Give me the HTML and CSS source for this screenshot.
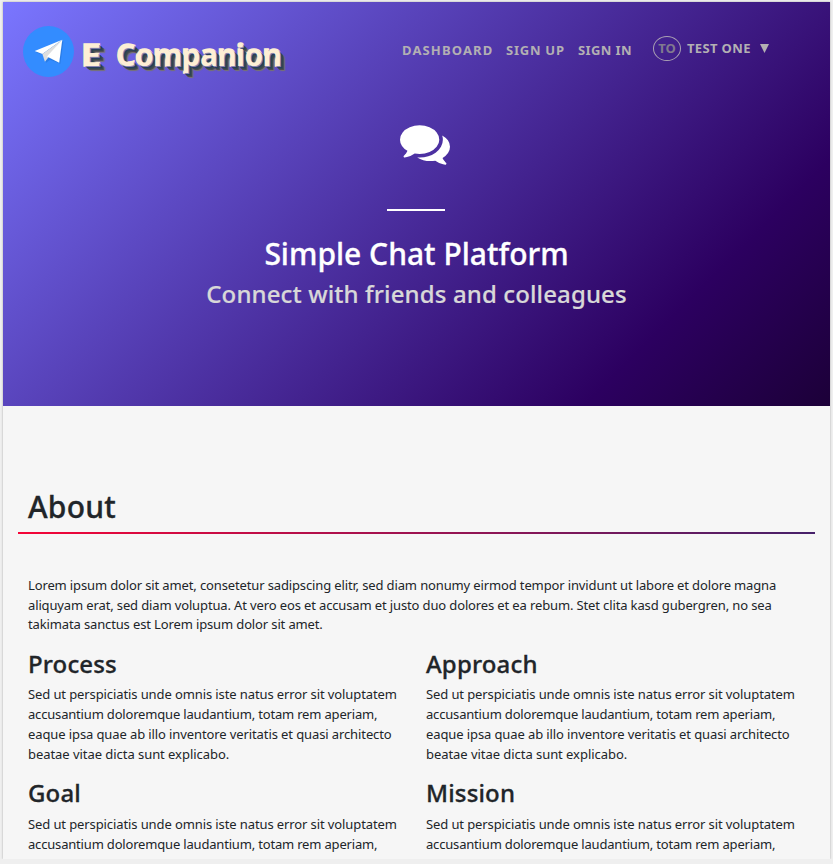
FILE: index.html
```html
<!DOCTYPE html>
<html lang="en">
<head>
<meta charset="utf-8">
<title>E Companion</title>
<link rel="stylesheet" href="styles.css">
</head>
<body>
<div class="page">
  <header class="hero">
    <nav class="nav">
      <a class="brand">
        <svg class="brand-icon" viewBox="0 0 50 50">
          <circle cx="25" cy="25" r="25" fill="#338cff"/>
          <path d="M12 25 39 14 36 36 26 32 22 35 19 27Z" fill="#1b5fb8" opacity=".35" transform="translate(.6 1)"/>
          <path d="M11.500 24.500 38.500 13.500 19 27.500Z" fill="#fff"/>
          <path d="M19 27.500 38.500 13.500 21.500 35Z" fill="#dedede"/>
          <path d="M23.500 30 38.500 13.500 35.500 36Z" fill="#fff"/>
        </svg>
        <span class="brand-name"><span class="brand-e">E</span> Companion</span>
      </a>
      <div class="links">
        <a class="link-dashboard">DASHBOARD</a>
        <a class="link-up">SIGN UP</a>
        <a class="link-in">SIGN IN</a>
      </div>
      <div class="user">
        <span class="avatar">TO</span>
        <span class="user-name">TEST ONE</span>
        <svg class="caret" viewBox="0 0 9 9"><path d="M0 0H9L4.500 9Z" fill="#b3b0b3"/></svg>
      </div>
    </nav>
    <div class="intro">
      <svg class="chat" viewBox="0 0 1792 1408">
        <path fill="#fff" d="M1408 512q0 139-94 257t-256.500 186.500-353.500 68.500q-86 0-176-16-124 88-278 128-36 9-86 16h-3q-11 0-20.500-8t-11.500-21q-1-3-1-6.500t.5-6.500 2-6l2.500-5 3.500-5.500 4-5 4.500-5 4-4.500q5-6 23-25t26-29.500 22.500-29 25-38.500 20.500-44q-124-72-195-177t-71-224q0-139 94-257t256.500-186.500 353.500-68.500 353.500 68.500 256.500 186.500 94 257zm384 256q0 120-71 224.500t-195 176.500q10 24 20.500 44t25 38.500 22.500 29 26 29.500 23 25q1 1 4 4.500t4.500 5 4 5 3.500 5.500l2.500 5 2 6 .5 6.500-1 6.500q-3 14-13 22t-22 7q-50-7-86-16-154-40-278-128-90 16-176 16-271 0-472-132 58 4 88 4 161 0 309-45t264-129q125-92 192-212t67-254q0-77-23-152 129 71 204 178t75 230z"/>
      </svg>
      <div class="rule"></div>
      <h1 class="title">Simple Chat Platform</h1>
      <p class="subtitle">Connect with friends and colleagues</p>
    </div>
  </header>
  <main class="about">
    <h2 class="about-title">About</h2>
    <div class="about-rule"></div>
    <p class="lead">Lorem ipsum dolor sit amet, consetetur sadipscing elitr, sed diam nonumy eirmod tempor invidunt ut labore et dolore magna<br>aliquyam erat, sed diam voluptua. At vero eos et accusam et justo duo dolores et ea rebum. Stet clita kasd gubergren, no sea<br>takimata sanctus est Lorem ipsum dolor sit amet.</p>
    <div class="grid">
      <section class="item">
        <h3>Process</h3>
        <p>Sed ut perspiciatis unde omnis iste natus error sit voluptatem<br><span class="tight">accusantium doloremque laudantium, totam rem aperiam,</span><br>eaque ipsa quae ab illo inventore veritatis et quasi architecto<br><span class="loose">beatae vitae dicta sunt explicabo.</span></p>
      </section>
      <section class="item">
        <h3>Approach</h3>
        <p>Sed ut perspiciatis unde omnis iste natus error sit voluptatem<br><span class="tight">accusantium doloremque laudantium, totam rem aperiam,</span><br>eaque ipsa quae ab illo inventore veritatis et quasi architecto<br><span class="loose">beatae vitae dicta sunt explicabo.</span></p>
      </section>
      <section class="item lower">
        <h3>Goal</h3>
        <p>Sed ut perspiciatis unde omnis iste natus error sit voluptatem<br><span class="tight">accusantium doloremque laudantium, totam rem aperiam,</span><br>eaque ipsa quae ab illo inventore veritatis et quasi architecto</p>
      </section>
      <section class="item lower">
        <h3>Mission</h3>
        <p>Sed ut perspiciatis unde omnis iste natus error sit voluptatem<br><span class="tight">accusantium doloremque laudantium, totam rem aperiam,</span><br>eaque ipsa quae ab illo inventore veritatis et quasi architecto</p>
      </section>
    </div>
  </main>
</div>
</body>
</html>
```
FILE: styles.css
```css
* { box-sizing: border-box; }
html { height: 100%; overflow: hidden; background: #efefef; }
body { margin: 0; padding: 2px 3px 0; color: #212529; font: 13px/20px "Noto Sans", "Open Sans", sans-serif; }
h1, h2, h3, p { margin: 0; font-weight: 500; white-space: nowrap; }
h1, h2, h3 { -webkit-text-stroke: .3px currentColor; }
.page { width: 827px; height: 857px; overflow: hidden; background: #f6f6f6; box-shadow: 0 0 2px rgba(0,0,0,.3); }
.hero { height: 404px; background: linear-gradient(135deg, #7a76ff 0%, #2c0060 80%, #1c0038 100%); }
.nav { display: flex; height: 98px; padding: 24px 0 0 20px; white-space: nowrap; color: #b3b0b3; font-weight: 700; }
.brand { display: flex; width: 379px; gap: 7px; }
.brand-icon { width: 51px; height: 51px; flex: none; }
.brand-name { font: 700 30px/57px "Noto Sans", sans-serif; color: #feefd5; letter-spacing: -.65px; -webkit-text-stroke: 1.5px #feefd5; paint-order: stroke fill; stroke-linejoin: round; text-shadow: 1px 1px 0 #8a86b0, 2px 2px 0 #253c61, 3px 3px 0 #35484e, 4px 4px 0 #4c4b50, 5px 5px 1px #77746f; }
.brand-e { display: inline-block; margin-right: 12px; transform: scaleX(1.2); transform-origin: 0 50%; }
.links { display: flex; width: 251px; padding-top: 14px; letter-spacing: 1.15px; }
.link-dashboard { width: 104px; }
.link-up { width: 72px; letter-spacing: .75px; }
.link-in { letter-spacing: .4px; }
.user { display: flex; align-items: center; height: 26px; margin-top: 9px; }
.avatar { width: 28px; height: 25px; border: 1px solid #aaa1b3; border-radius: 50%; line-height: 23px; text-align: center; color: #81798f; }
.user-name { margin: 0 9px 0 6px; letter-spacing: .35px; }
.caret { width: 9px; height: 9px; }
.intro { display: flex; flex-direction: column; align-items: center; padding-top: 25px; color: #fff; }
.chat { width: 50px; height: 40px; margin-left: 17px; }
.rule { width: 58px; height: 2px; margin: 44px 1px 0 0; background: #fff; }
.title { margin-top: 23px; font-size: 30px; line-height: 40px; }
.subtitle { font-size: 24px; line-height: 40px; letter-spacing: .12px; color: #d8d8d8; -webkit-text-stroke: .2px currentColor; }
.about { padding: 80px 15px 0; }
.about-title { padding-left: 10px; font-size: 30px; line-height: 42px; letter-spacing: .2px; }
.about-rule { height: 2px; margin-top: 4px; background: linear-gradient(90deg, #f50537, #46206a); }
.lead { padding: 42px 0 0 10px; font-weight: 400; line-height: 19.6px; letter-spacing: -.133px; }
.grid { display: grid; grid-template-columns: 398px 398px; padding: 14.6px 0 0 10px; }
.item { height: 130px; }
.item h3 { font-size: 24px; line-height: 30px; letter-spacing: .15px; }
.item p { margin-top: 5px; font-weight: 400; line-height: 20px; letter-spacing: -.105px; }
.item .tight { letter-spacing: -.18px; }
.item .loose { letter-spacing: -.05px; }
.lower { margin-top: -1px; }
.lower p { margin-top: 6px; }
```
